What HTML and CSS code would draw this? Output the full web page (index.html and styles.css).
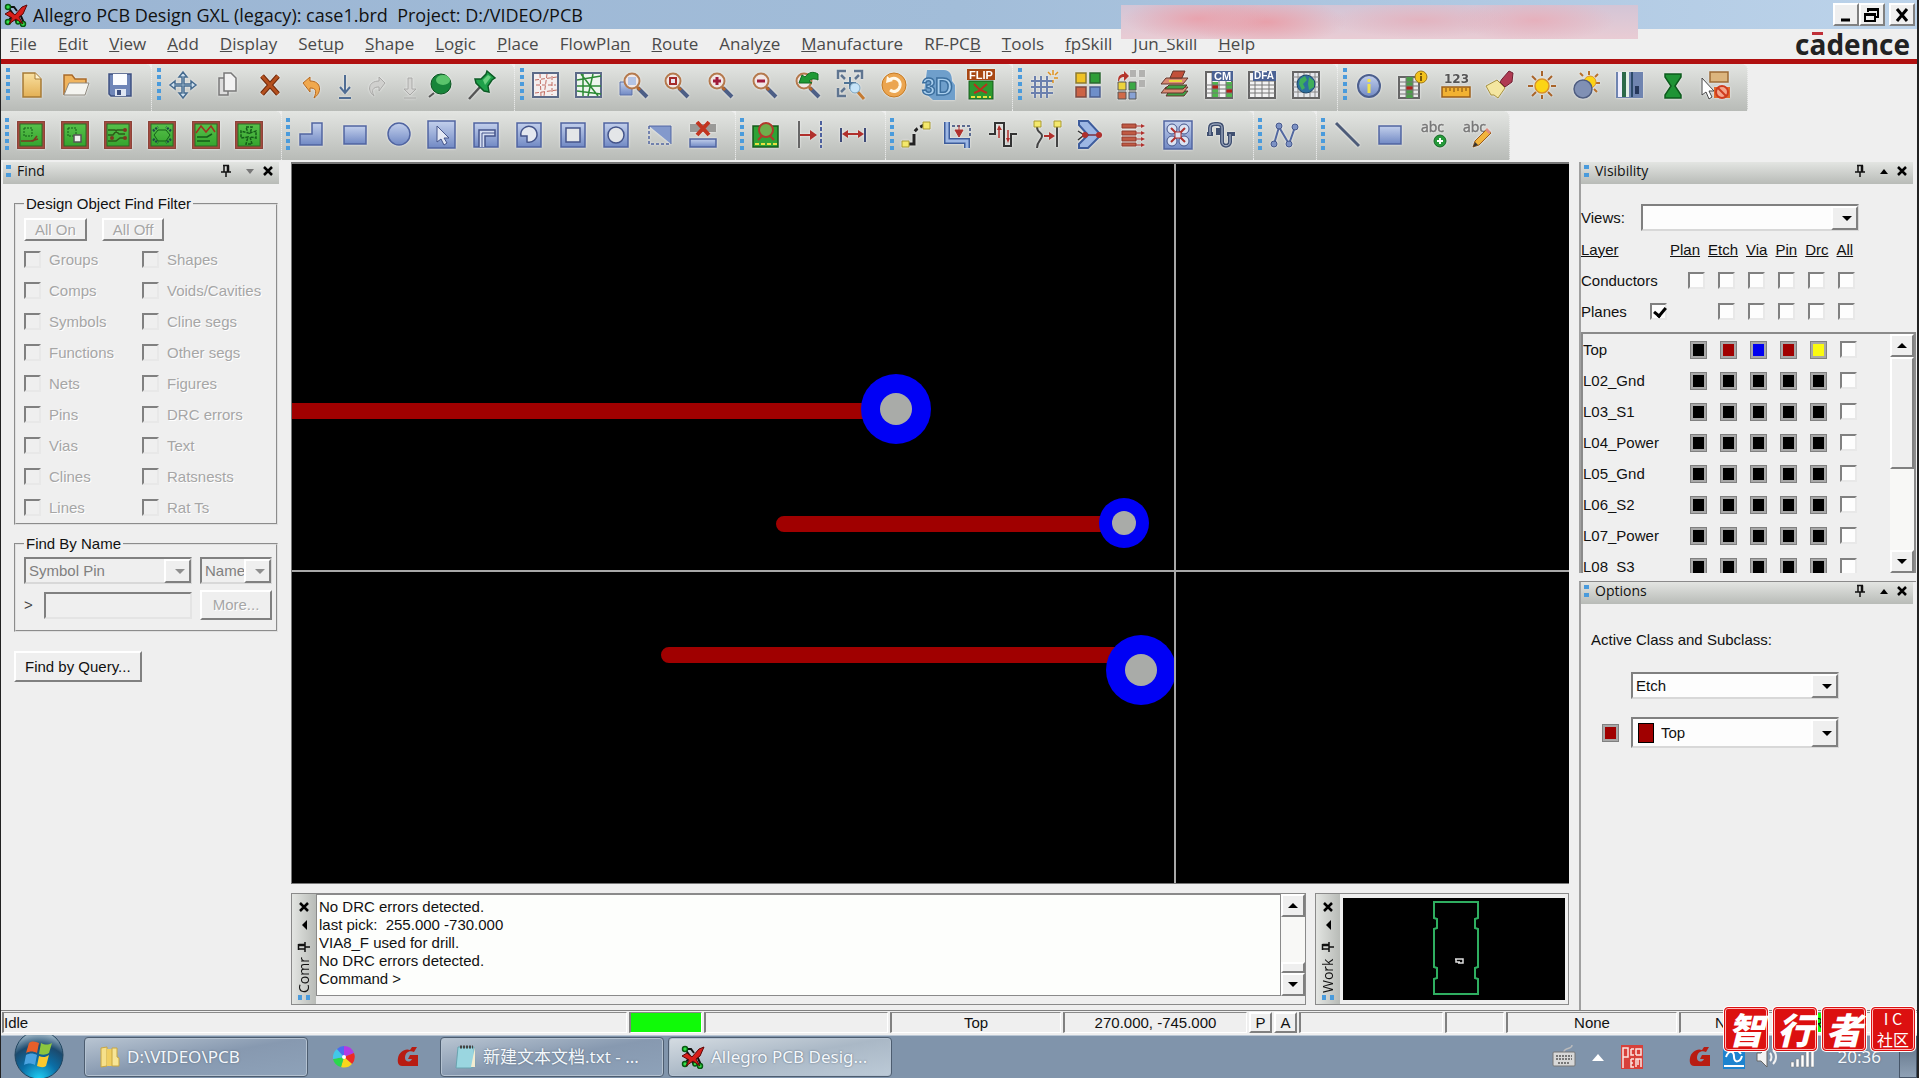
FILE: index.html
```
<!DOCTYPE html>
<html lang="en">
<head>
    <meta charset="utf-8">
    <meta name="viewport" content="width=device-width, initial-scale=1.0">
    <title>Allegro PCB Design GXL (legacy): case1.brd</title>
    <link rel="stylesheet" href="styles.css">
</head>
<body>
    <!-- Shared gradients and symbols -->
    <svg class="defs" width="0" height="0" aria-hidden="true">
        <defs>
            <linearGradient id="blue" x1="0" y1="0" x2="0" y2="1"><stop offset="0" stop-color="#c3d0ec"/><stop offset="1" stop-color="#7189c4"/></linearGradient>
            <linearGradient id="green" x1="0" y1="0" x2="0" y2="1"><stop offset="0" stop-color="#57c04a"/><stop offset="1" stop-color="#35a52e"/></linearGradient>
            <linearGradient id="sand" x1="0" y1="0" x2="0" y2="1"><stop offset="0" stop-color="#f9e0a0"/><stop offset="1" stop-color="#e3b055"/></linearGradient>
            <radialGradient id="orb" cx=".5" cy="1" r="1"><stop offset="0" stop-color="#1fd0f5"/><stop offset=".4" stop-color="#0b6ea6"/><stop offset=".7" stop-color="#1b4a6e"/><stop offset="1" stop-color="#b9ccd8"/></radialGradient>
        </defs>
        <symbol id="app" viewBox="0 0 24 24">
            <path d="M4 4l5 7-5 8M4 4h6l3 4M19 20h-6l-2-4M20 5l-4 6 4 9" fill="none" stroke="#111" stroke-width="2"/>
            <g fill="#35e04a" stroke="#075a12" stroke-width="1.5"><circle cx="4" cy="4" r="2.5"/><circle cx="4" cy="19" r="2.5"/><circle cx="19" cy="21" r="2.5"/><circle cx="14" cy="19" r="2"/></g>
            <path d="M1 11l5-3 5 4 7-8 5-2-4 9-4 3 4 7-7-5-7 5 3-6z" fill="#d81e1a" stroke="#5c0808"/>
        </symbol>
        <symbol id="pin" viewBox="0 0 12 14">
            <path d="M3 1.500h6M4 1.500v6M7.500 1.500v6M8.500 1.500v6M1 8h10M6 8v5" fill="none" stroke="#111" stroke-width="1.500"/>
        </symbol>
        <symbol id="cross" viewBox="0 0 12 12"><path d="M2 2l8 8M10 2l-8 8" stroke="#000" stroke-width="2.500"/></symbol>
        <symbol id="lens" viewBox="0 0 28 28">
            <path d="M17 17l9 9" stroke="#4d5f86" stroke-width="4"/><path d="M16 16l3 3" stroke="#b5662c" stroke-width="3"/>
            <circle cx="11" cy="10" r="7.500" fill="#f1e7e6" stroke="#b4794d" stroke-width="2"/>
        </symbol>
        <symbol id="board" viewBox="0 0 28 28"><rect x="0" y="0" width="28" height="28" rx="1" fill="#a14a3f" stroke="#7a3a33"/><rect x="3" y="3" width="22" height="22" fill="url(#green)" stroke="#2c6b26"/></symbol>
        <symbol id="gred" viewBox="0 0 24 24"><path d="M21 2l-3 5c-5-2-9 1-9 6 0 4 5 5 7 1h-4l2-4h8v11H6C3 21 1 18 2 13 3 7 9 3 14 5l2-3z" fill="#b81c12"/></symbol>
        <symbol id="plate" viewBox="0 0 28 28"><rect x="2" y="2" width="24" height="24" fill="url(#blue)" stroke="#4f63a0" stroke-width="1.500"/></symbol>
    </svg>

    <header class="titlebar">
        <svg class="app-icon"><use href="#app"/></svg>
        <h1>Allegro PCB Design GXL (legacy): case1.brd&nbsp; Project: D:/VIDEO/PCB</h1>
        <div class="window-buttons">
            <button aria-label="Minimize"><svg viewBox="0 0 20 18"><path d="M5 14h9" stroke="#000" stroke-width="3"/></svg></button>
            <button aria-label="Restore"><svg viewBox="0 0 20 18"><path d="M6 6V3h10v8h-3M6 4h10M3 8h10v7H3zM3 9h10" fill="none" stroke="#000" stroke-width="2"/></svg></button>
            <button class="close" aria-label="Close"><svg viewBox="0 0 20 18"><path d="M5 3l10 12M15 3L5 15" stroke="#000" stroke-width="3"/></svg></button>
        </div>
        <div class="smudge"></div>
    </header>

    <nav class="menubar">
        <a href="#"><u>F</u>ile</a>
        <a href="#"><u>E</u>dit</a>
        <a href="#"><u>V</u>iew</a>
        <a href="#"><u>A</u>dd</a>
        <a href="#"><u>D</u>isplay</a>
        <a href="#">Set<u>u</u>p</a>
        <a href="#"><u>S</u>hape</a>
        <a href="#"><u>L</u>ogic</a>
        <a href="#"><u>P</u>lace</a>
        <a href="#">FlowPla<u>n</u></a>
        <a href="#"><u>R</u>oute</a>
        <a href="#">Analy<u>z</u>e</a>
        <a href="#"><u>M</u>anufacture</a>
        <a href="#">RF-PC<u>B</u></a>
        <a href="#"><u>T</u>ools</a>
        <a href="#"><u>f</u>pSkill</a>
        <a href="#"><u>J</u>un_Skill</a>
        <a href="#"><u>H</u>elp</a>
        <span class="brand">c<span class="macron">a</span>dence</span>
    </nav>

    <div class="toolbars">
        <div class="toolbar">
            <div class="group g-file">
                <button aria-label="New"><svg viewBox="0 0 28 28"><path d="M5 2h12l6 6v18H5z" fill="url(#sand)" stroke="#a57a35" stroke-width="1.500"/><path d="M17 2v6h6" fill="#fff3cf" stroke="#a57a35"/></svg></button>
                <button aria-label="Open"><svg viewBox="0 0 28 28"><path d="M2 24V4h8l3 4h11v6" fill="#f0b45e" stroke="#a8692a" stroke-width="1.500"/><path d="M2 24L7 12h20l-4 12z" fill="#f4f4f0" stroke="#8f8a80"/></svg></button>
                <button aria-label="Save"><svg viewBox="0 0 28 28"><path d="M3 3h22v22H5l-2-2z" fill="#6f86b8" stroke="#3e5080" stroke-width="1.500"/><path d="M7 3h14v11H7z" fill="#fafcff"/><path d="M9 18h11v7H9z" fill="#dfe6f2"/><path d="M11 19h4v5h-4z" fill="#3e5080"/></svg></button>
            </div>
            <div class="group g-edit">
                <button aria-label="Move"><svg viewBox="0 0 28 28"><path d="M14 1l4 5h-3v7h7v-3l5 4-5 4v-3h-7v7h3l-4 5-4-5h3v-7H6v3l-5-4 5-4v3h7V6h-3z" fill="#cfe0ef" stroke="#466b8f" stroke-width="1.500"/></svg></button>
                <button aria-label="Copy"><svg viewBox="0 0 28 28"><path d="M5 7h9v17H5z" fill="#ddd" stroke="#777" stroke-width="1.500"/><path d="M10 2h7l5 5v13H10z" fill="#f2f2f2" stroke="#777" stroke-width="1.500"/></svg></button>
                <button aria-label="Delete"><svg viewBox="0 0 28 28"><path d="M4 5l16 18M20 5L4 23" stroke="#6f2a0b" stroke-width="5"/><path d="M4 5l16 18M20 5L4 23" stroke="#b4501e" stroke-width="3"/></svg></button>
                <button class="mid" aria-label="Undo"><svg viewBox="0 0 28 28"><path d="M4 12l7-6v4c12 0 12 12 4 17 3-7 2-10-4-10v4z" fill="#f0a84e" stroke="#b5671d"/></svg></button>
                <button class="narrow" aria-label="Undo list"><svg viewBox="0 0 28 28"><path d="M14 4v17M9 16l5 6 5-6M8 27h12" fill="none" stroke="#4f6d94" stroke-width="2"/></svg></button>
                <button class="mid" aria-label="Redo"><svg viewBox="0 0 28 28"><path d="M21 12l-6-6v4c-11 0-12 10-5 15-3-6-1-9 5-9v4z" fill="#d0d0ce" stroke="#a8a8a6"/></svg></button>
                <button class="narrow" aria-label="Redo list"><svg viewBox="0 0 28 28"><path d="M12 7h4v11h4l-6 6-6-6h4zM8 27h12" fill="#d4d4d2" stroke="#a8a8a6"/></svg></button>
                <button class="mid" aria-label="Fix"><svg viewBox="0 0 28 28"><path d="M6 22l-5 4" stroke="#555" stroke-width="2"/><circle cx="13" cy="13" r="10" fill="#17853a" stroke="#0c5220"/><ellipse cx="15" cy="9" rx="7" ry="5" fill="#5ac46c"/></svg></button>
                <button aria-label="Unfix"><svg viewBox="0 0 28 28"><path d="M0 28l11-12" stroke="#555" stroke-width="2.500"/><path d="M18 0l8 7-3 2-4 6 1 6-5-1L7 12l-1-4 6 0 5-5z" fill="#1fa04a" stroke="#0b5a24" stroke-width="1.500"/><path d="M14 9l5-5 3 2-6 8z" fill="#69d07f"/></svg></button>
            </div>
            <div class="group g-view">
                <button aria-label="Unrats all"><svg viewBox="0 0 28 28"><rect x="1" y="2" width="25" height="24" fill="#f5efef" stroke="#5c6a88" stroke-width="2"/><path d="M3 9l22-3M4 14h20M3 22l22-3M8 3l1 22M15 3l-3 22M20 5v19" fill="none" stroke="#c26a60" stroke-dasharray="4 2"/></svg></button>
                <button aria-label="Rats all"><svg viewBox="0 0 28 28"><rect x="1" y="2" width="25" height="24" fill="#eef5ee" stroke="#5c6a88" stroke-width="2"/><path d="M2 9l24-4M2 15h24M2 20l24 3M8 3v22M18 3l-5 22M6 3l17 22" fill="none" stroke="#2c8a35" stroke-width="1.500"/></svg></button>
                <button aria-label="Zoom points"><svg viewBox="0 0 28 28"><path d="M1 11h12v13H1z" fill="url(#blue)" stroke="#5c70a8"/><use href="#lens" x="2" width="28" height="28"/><path d="M9 6h8v8H9z" fill="#b4c4e6"/></svg></button>
                <button aria-label="Zoom fit"><svg viewBox="0 0 28 28"><use href="#lens"/><path d="M8 7h6v6H8z" fill="#e8e6f2" stroke="#a52a2a" stroke-width="2"/></svg></button>
                <button aria-label="Zoom in"><svg viewBox="0 0 28 28"><use href="#lens"/><path d="M11 6v8M7 10h8" stroke="#a01c3c" stroke-width="3"/></svg></button>
                <button aria-label="Zoom out"><svg viewBox="0 0 28 28"><use href="#lens"/><path d="M7 10h8" stroke="#a01c3c" stroke-width="3"/></svg></button>
                <button aria-label="Zoom previous"><svg viewBox="0 0 28 28"><use href="#lens"/><path d="M6 12l3-8 3 2c4-5 8-6 13-3v6c-4-2-7-1-9 1l3 2z" fill="#1f9a35" stroke="#0f6a1f"/></svg></button>
                <button aria-label="Zoom center"><svg viewBox="0 0 28 28"><path d="M1 8V0h8M17 0h8v8M1 17v8h8M4 4l4 4M22 4l-4 4M4 21l4-4" fill="none" stroke="#5f7590" stroke-width="2.500"/><path d="M13 6v12M7 12h12" stroke="#4d7396" stroke-width="2"/><path d="M20 20l7 8" stroke="#c47a31" stroke-width="3"/><circle cx="18" cy="17" r="5" fill="#c6e4f8" stroke="#7ba4c0"/></svg></button>
                <button aria-label="Redraw"><svg viewBox="0 0 28 28"><circle cx="14" cy="14" r="12" fill="#eba550" stroke="#c57a22"/><path d="M9 9c6-4 12 0 11 6-1 5-6 7-10 4" fill="none" stroke="#fff8e8" stroke-width="3"/><path d="M6 12l1-7 6 5z" fill="#fff8e8"/></svg></button>
                <button aria-label="3D view"><svg viewBox="0 0 28 28"><path d="M3-1h17c6 0 8 5 8 11l3 4v15H9l-9-8z" fill="#6f9fcb"/><text x="-2" y="24" font-family="Liberation Sans" font-weight="bold" font-size="24" fill="#a9cfee" stroke="#3c6f9e" stroke-width="1.500">3D</text></svg></button>
                <button aria-label="Flip board"><svg viewBox="0 0 28 28"><rect x="0" y="-2" width="28" height="11" fill="#a84713"/><text x="2" y="8" font-family="Liberation Sans" font-weight="bold" font-size="11" fill="#fff">FLIP</text><rect x="2" y="10" width="24" height="18" fill="#2c9a30" stroke="#14581a"/><path d="M7 13l6 6 7-6M7 22l7-3 6 3" fill="none" stroke="#b8301e" stroke-width="2"/><path d="M4 26h20" stroke="#e8e040" stroke-width="2" stroke-dasharray="4 2"/></svg></button>
            </div>
            <div class="group g-setup">
                <button aria-label="Grid toggle"><svg viewBox="0 0 28 28"><path d="M1 10h22M1 16h22M1 22h22M5 5v22M11 5v22M17 5v22" stroke="#6b80ae" stroke-width="2"/><path d="M23-1v5M18 1l3 3M28 1l-3 3M24 7h4M23 9v3" stroke="#e0921e" stroke-width="1.500"/></svg></button>
                <button aria-label="Color"><svg viewBox="0 0 28 28"><g stroke-width="1.500"><path d="M2 2h10v10H2z" fill="#f0c325" stroke="#8a7a30"/><path d="M16 2h10v10H16z" fill="#2f9e38" stroke="#2b6630"/><path d="M2 16h10v10H2z" fill="#cc6345" stroke="#7d4a40"/><path d="M16 16h10v10H16z" fill="#6f8fc9" stroke="#4c5f8d"/></g></svg></button>
                <button aria-label="Color priority"><svg viewBox="0 0 28 28"><path d="M13-1h6v7h-6zM22-1h6v7h-6zM22 9h6v7h-6z" fill="#b2b2b0"/><path d="M1 10c0-5 2-7 6-7V0l5 5-5 5V6c-3 0-4 1-5 4z" fill="#b5362c"/><path d="M1 11h8v8H1z" fill="#ecd33c" stroke="#555"/><path d="M12 11h7v8h-7z" fill="#3aa845" stroke="#555"/><path d="M1 21h8v7H1z" fill="#d06a48" stroke="#555"/><path d="M12 21h7v7h-7z" fill="#88a2d4" stroke="#555"/></svg></button>
                <button aria-label="Cross section"><svg viewBox="0 0 28 28"><g stroke="#60342a"><path d="M5 25l3-5h19l-4 5z" fill="#3fa045"/><path d="M0 22l5-6h22l-5 6z" fill="#d98a72"/><path d="M4 18l4-4h18l-4 4z" fill="#3fa045"/><path d="M0 13l5-6h22l-5 6z" fill="#d98a72"/><path d="M8 10h13" stroke="#e8d93a" stroke-width="2"/><path d="M9 7l3-7h12l-3 7z" fill="#c2503a"/></g></svg></button>
                <button aria-label="Constraint manager"><svg viewBox="0 0 28 28"><path d="M1 1h26v26H1z" fill="#f3f3f3" stroke="#666" stroke-width="2"/><path d="M7 11h6v15H7zM21 11h6v15h-6z" fill="#4fb64c"/><path d="M7 14h6v4H7zM21 18h6v4h-6z" fill="#b02018"/><path d="M1 14h26M1 18h26M1 22h26M7 2v24M14 10v16M21 10v16" stroke="#777"/><path d="M7 0h21v10H7z" fill="#4a6294"/><text x="9" y="9" font-family="Liberation Sans" font-size="11" font-weight="bold" fill="#fff">CM</text></svg></button>
                <button aria-label="DFA"><svg viewBox="0 0 28 28"><path d="M1 1h26v26H1z" fill="#f3f3f3" stroke="#666" stroke-width="2"/><path d="M1 10h26M1 14h26M1 18h26M1 22h26M7 2v24M14 10v16M21 10v16" stroke="#777"/><path d="M5 0h23v10H5z" fill="#4a6294"/><text x="6" y="8" font-family="Liberation Sans" font-size="10" font-weight="bold" fill="#fff">DFA</text></svg></button>
                <button aria-label="Global constraints"><svg viewBox="0 0 28 28"><path d="M1 1h26v26H1z" fill="#e6e8ec" stroke="#666" stroke-width="2"/><path d="M1 6h26M1 11h26M1 16h26M1 21h26M6 2v24M12 2v24M18 2v24M23 2v24" stroke="#888"/><circle cx="14" cy="13" r="9" fill="#2c6f9e" stroke="#1d4668"/><path d="M8 8l5-3 2 4-4 4 2 4-3 2-3-6zM17 6l5 4v6l-5 3-1-6z" fill="#3fae5a"/></svg></button>
            </div>
            <div class="group g-info">
                <button aria-label="Show element"><svg viewBox="0 0 28 28"><circle cx="14" cy="15" r="11" fill="url(#blue)" stroke="#4c5f8d" stroke-width="2"/><path d="M14 8v3M14 13v9" stroke="#f0e24c" stroke-width="3"/></svg></button>
                <button aria-label="Constraint info"><svg viewBox="0 0 28 28"><path d="M1 6h20v21H1z" fill="#e8e8e8" stroke="#666" stroke-width="2"/><path d="M8 6h7v21H8z" fill="#4a9c48"/><path d="M8 15h7v4H8z" fill="#b02018"/><path d="M2 11h19M2 15h19M2 19h19M2 23h19M8 6v20M15 6v20" stroke="#777"/><circle cx="23" cy="6" r="6" fill="#f3c21c" stroke="#9a7412"/><path d="M23 2v2M23 5v5" stroke="#7d5a05" stroke-width="2"/></svg></button>
                <button aria-label="Measure"><svg viewBox="0 0 28 28"><text x="2" y="12" font-family="DejaVu Sans" font-size="12" font-weight="bold" fill="#555">123</text><path d="M0 16h28v10H0z" fill="#f2b232" stroke="#9a5f1a" stroke-width="1.500"/><path d="M4 17v4M8 17v3M12 17v4M16 17v3M20 17v4M24 17v3" stroke="#7d4b10"/></svg></button>
                <button aria-label="Assign color"><svg viewBox="0 0 28 28"><path d="M17 8l7-8 4 2-1 9-7 5-5-5z" fill="#b03a52" stroke="#6e1f30"/><path d="M12 9l8 8-7 10-4-3-3 0-5-9z" fill="#f4e6a0" stroke="#a5903f"/></svg></button>
                <button aria-label="Highlight"><svg viewBox="0 0 28 28"><path d="M14 0v5M14 24v4M0 15h5M23 15h5M4 5l4 4M24 5l-4 4M4 25l4-4M24 25l-4-4" stroke="#a8642a" stroke-width="2"/><circle cx="14" cy="15" r="7" fill="#fcd414" stroke="#d8912a" stroke-width="1.500"/></svg></button>
                <button aria-label="Dehighlight"><svg viewBox="0 0 28 28"><path d="M17 0v4M26 3l-3 3M28 12h-4M25 21l-3-3M8 2l3 3" stroke="#b8702a" stroke-width="2"/><circle cx="18" cy="11" r="6" fill="#fcd414" stroke="#d8912a"/><circle cx="11" cy="18" r="9" fill="#8090b4" stroke="#4f5d80" stroke-width="1.500"/></svg></button>
                <button aria-label="Shadow mode"><svg viewBox="0 0 28 28"><path d="M1 1h27v26H1z" fill="#6f84b0"/><path d="M3 1h4v25H3z" fill="#eef"/><path d="M7 1h4v25H7z" fill="#2c6a4a"/><path d="M11 1h3v25h-3z" fill="#e4f0e8"/><path d="M17 1v25" stroke="#2c4a6a" stroke-width="2"/><path d="M20 15h4v8h-4z" fill="#26385c"/></svg></button>
                <button aria-label="Delay"><svg viewBox="0 0 28 28"><path d="M6 3h16v3l-6 9 6 9v3H6v-3l6-9-6-9z" fill="#1f9436" stroke="#0d5a1d" stroke-width="1.500"/></svg></button>
                <button aria-label="Waive DRC"><svg viewBox="0 0 28 28"><path d="M8 1h18v10H8z" fill="#dcb57e" stroke="#9c6a35" stroke-width="1.500"/><path d="M12 16h16v11H12z" fill="#e06a2c"/><circle cx="20" cy="21" r="6" fill="#f3a58c" stroke="#cf3a1e" stroke-width="2"/><path d="M16 17l8 8" stroke="#cf3a1e" stroke-width="2"/><path d="M0 7v17l4-3 3 7 3-2-3-6h5z" fill="#fff" stroke="#444"/></svg></button>
            </div>
        </div>
        <div class="toolbar lower">
            <div class="group g-modes">
                <button aria-label="Placement edit"><svg viewBox="0 0 28 28"><use href="#board"/><path d="M7 7h8v8H7z" fill="none" stroke="#145c18" stroke-dasharray="2 1"/><path d="M4 20h12l4-5M14 20l7-2" fill="none" stroke="#7a3a20" stroke-width="1.500"/></svg></button>
                <button aria-label="General edit"><svg viewBox="0 0 28 28"><use href="#board"/><path d="M7 7h8v8H7z" fill="none" stroke="#145c18" stroke-dasharray="2 1"/><path d="M13 14h7v7h-7z" fill="#eee" stroke="#555" stroke-width="1.500"/></svg></button>
                <button aria-label="Etch edit"><svg viewBox="0 0 28 28"><use href="#board"/><path d="M4 9h7l4 4h6M4 14h5l4-5h7M4 20h8l4-3h5" fill="none" stroke="#2c5c18" stroke-width="1.500"/><g fill="#7a3a20"><circle cx="21" cy="9" r="2"/><circle cx="21" cy="17" r="2"/><circle cx="8" cy="17" r="2"/></g></svg></button>
                <button aria-label="Signal integrity"><svg viewBox="0 0 28 28"><use href="#board"/><path d="M10 9h8l4 5-4 6h-8l-4-6z" fill="none" stroke="#145c18"/><path d="M5 10l5-4M23 10l-5-4M5 18l5 4M23 18l-5 4" stroke="#1c4a44" stroke-width="2.500" stroke-dasharray="2 1"/></svg></button>
                <button aria-label="Power analysis"><svg viewBox="0 0 28 28"><use href="#board"/><path d="M4 12l5-7 5 6 5-6 4 6" fill="none" stroke="#a03020" stroke-width="1.500"/><path d="M5 16h10l5-3M5 20h13" stroke="#145c18" stroke-width="1.500" fill="none"/></svg></button>
                <button aria-label="Flow planning"><svg viewBox="0 0 28 28"><use href="#board"/><path d="M11 6h6l-2 6 6-2v7l-6-1 2 7h-6l2-7-7 1v-7l7 2z" fill="none" stroke="#145c18" stroke-width="1.500" stroke-dasharray="3 1"/></svg></button>
            </div>
            <div class="group g-shape">
                <button aria-label="Add polygon"><svg viewBox="0 0 28 28"><path d="M14 2h10v22H2V13h12z" fill="url(#blue)" stroke="#5064a0" stroke-width="1.500"/></svg></button>
                <button aria-label="Add rectangle"><svg viewBox="0 0 28 28"><path d="M3 5h22v18H3z" fill="url(#blue)" stroke="#5064a0" stroke-width="1.500"/></svg></button>
                <button aria-label="Add circle"><svg viewBox="0 0 28 28"><circle cx="14" cy="13" r="11" fill="url(#blue)" stroke="#5064a0" stroke-width="1.500"/></svg></button>
                <button aria-label="Select shape"><svg viewBox="0 0 28 28"><rect x="0" y="0" width="27" height="27" fill="url(#blue)" stroke="#5064a0" stroke-width="1.500"/><path d="M9 5v16l4-3 3 6 3-2-3-5h5z" fill="#e4e8f4" stroke="#44548a"/></svg></button>
                <button aria-label="Void polygon"><svg viewBox="0 0 28 28"><use href="#plate"/><path d="M7 26V9h16v6H13v11" fill="#d5def2" stroke="#44548a" stroke-width="1.500"/><path d="M10 26V12h13" fill="none" stroke="#44548a"/></svg></button>
                <button aria-label="Void arc"><svg viewBox="0 0 28 28"><use href="#plate"/><path d="M9 7a8 8 0 1 1 3 14v-6H6a8 8 0 0 1 3-8z" fill="#e4e8f0" stroke="#44548a" stroke-width="1.500"/></svg></button>
                <button aria-label="Void rectangle"><svg viewBox="0 0 28 28"><use href="#plate"/><path d="M7 7h14v14H7z" fill="#e4e6e8" stroke="#44548a" stroke-width="1.500"/></svg></button>
                <button aria-label="Void circle"><svg viewBox="0 0 28 28"><use href="#plate"/><circle cx="14" cy="14" r="8" fill="#e4e6e8" stroke="#44548a" stroke-width="1.500"/></svg></button>
                <button aria-label="Void element"><svg viewBox="0 0 28 28"><path d="M3 5h22v18z" fill="#8399cc"/><path d="M3 5v18h22" fill="none" stroke="#5064a0" stroke-width="1.500" stroke-dasharray="3 2"/><path d="M3 5h22v18" fill="none" stroke="#5064a0"/></svg></button>
                <button aria-label="Delete islands"><svg viewBox="0 0 28 28"><path d="M1 3h26v8H1z" fill="#9a9a98"/><path d="M8 1l12 13M20 1L8 14" stroke="#c23520" stroke-width="4"/><path d="M1 18h26v8H1z" fill="url(#blue)" stroke="#5064a0" stroke-width="1.500"/></svg></button>
            </div>
            <div class="group g-dim">
                <button aria-label="Dimension environment"><svg viewBox="0 0 28 28"><rect x="1" y="5" width="25" height="21" fill="#2fa335" stroke="#14581a" stroke-width="1.500"/><path d="M3 23h22" stroke="#e8e040" stroke-width="2" stroke-dasharray="4 2"/><circle cx="14" cy="9" r="7" fill="#6fae4c" stroke="#b23a2c" stroke-width="2"/><path d="M10 15l-4 4M18 15l4 4" stroke="#b23a2c" stroke-width="2"/></svg></button>
                <button aria-label="Spacing"><svg viewBox="0 0 28 28"><path d="M3 0v27" stroke="#666" stroke-width="2"/><path d="M25 0v27" stroke="#4c5f9d" stroke-width="2" stroke-dasharray="4 2"/><path d="M4 14h12" stroke="#b0302c" stroke-width="2"/><path d="M14 9l7 5-7 5z" fill="#b0302c"/></svg></button>
                <button aria-label="Distance"><svg viewBox="0 0 28 28"><path d="M2 7v14M26 7v14" stroke="#3e4a78" stroke-width="2"/><path d="M6 13h16" stroke="#b0302c" stroke-width="2"/><path d="M3 13l6-4v8zM25 13l-6-4v8z" fill="#b0302c"/></svg></button>
            </div>
            <div class="group g-route">
                <button aria-label="Add connect"><svg viewBox="0 0 28 28"><path d="M4 23h8V11l3-3 7-4" fill="none" stroke="#222" stroke-width="3" stroke-dasharray="18 3 4 3"/><path d="M0 20h7v6H0zM21 1h7v7h-7z" fill="#f4e86c" stroke="#a89a30"/></svg></button>
                <button aria-label="Slide"><svg viewBox="0 0 28 28"><path d="M2 1v19h20v7" fill="none" stroke="#3d5c9c" stroke-width="6"/><path d="M2 1v19h20v7" fill="none" stroke="#9db7e4" stroke-width="3"/><path d="M7 5h18v12" fill="none" stroke="#5a6a90" stroke-width="2" stroke-dasharray="3 2"/><path d="M10 9h8l-4 7zM14 4v6" fill="#b0302c" stroke="#b0302c"/></svg></button>
                <button aria-label="Delay tune"><svg viewBox="0 0 28 28"><path d="M0 13h6V2h9v23h7V13h6" fill="none" stroke="#333" stroke-width="2"/><path d="M10 17V6M19 9v9" stroke="#b0302c" stroke-width="1.500"/><path d="M8 9l2-5 3 5zM17 17h4l-2 5z" fill="#b0302c"/></svg></button>
                <button aria-label="Custom smooth"><svg viewBox="0 0 28 28"><path d="M4 6c0 6 5 5 5 9s-5 5-5 12M24 6v20" fill="none" stroke="#444" stroke-width="2"/><path d="M1 0h7v6H1zM21 0h7v6h-7z" fill="#f4e86c" stroke="#a89a30"/><path d="M11 15h6" stroke="#b0302c" stroke-width="2"/><path d="M16 11l6 4-6 4z" fill="#b0302c"/></svg></button>
                <button aria-label="Vertex"><svg viewBox="0 0 28 28"><path d="M3 0h9l13 14-13 13H3v-4l9-9-9-10z" fill="#9db7e4" stroke="#3d5c9c" stroke-width="2"/><path d="M2 10l6 4-6 5" fill="none" stroke="#333" stroke-width="1.500"/><path d="M9 14h12" stroke="#7d3040" stroke-width="1.500"/><circle cx="9" cy="14" r="3" fill="#b0302c"/><circle cx="23" cy="14" r="3" fill="#b0302c"/></svg></button>
                <button aria-label="Spread lines"><svg viewBox="0 0 28 28"><g fill="#c05a44" stroke="#8f3a2c"><path d="M2 3h14v4H2zM2 10h14v4H2zM2 16h14v4H2zM2 22h14v3H2z"/></g><path d="M16 5h7M16 12h7M16 18h7M16 24h7" stroke="#b0302c"/><path d="M21 3l4 2-4 2zM21 10l4 2-4 2zM21 16l4 2-4 2zM21 22l4 2-4 2z" fill="#b0302c"/></svg></button>
                <button aria-label="Gloss"><svg viewBox="0 0 28 28"><rect x="0" y="0" width="28" height="28" fill="url(#blue)" stroke="#5064a0" stroke-width="1.500"/><g fill="#dbe3f3" stroke="#44548a"><circle cx="8" cy="8" r="5"/><circle cx="20" cy="8" r="5"/><circle cx="8" cy="20" r="5"/><circle cx="20" cy="20" r="5"/></g><path d="M7 7l14 14M21 7L7 21" stroke="#b0302c" stroke-width="2"/><path d="M11 11h6v6h-6z" fill="#dbe3f3" stroke="#b0302c"/></svg></button>
                <button aria-label="Phase tune"><svg viewBox="0 0 28 28"><path d="M3 14V7c0-3 2-4 5-4h3c3 0 4 2 4 4v14c0 5 8 5 8 0v-8M11 14V7M0 13h6M20 13h8" fill="none" stroke="#3f4f70" stroke-width="4"/><path d="M3 14V7c0-3 2-4 5-4h3c3 0 4 2 4 4v14c0 5 8 5 8 0v-8" fill="none" stroke="#b9c4d8"/></svg></button>
            </div>
            <div class="group g-net">
                <button aria-label="Net schedule"><svg viewBox="0 0 28 28"><path d="M4 23L9 6l10 17 6-17" fill="none" stroke="#5268a0" stroke-width="2"/><g fill="#7d92c4" stroke="#46588c"><circle cx="4" cy="23" r="3"/><circle cx="9" cy="5" r="3"/><circle cx="19" cy="23" r="3"/><circle cx="25" cy="6" r="3"/></g></svg></button>
            </div>
            <div class="group g-text">
                <button aria-label="Add line"><svg viewBox="0 0 28 28"><path d="M3 2l23 23" stroke="#4d5b78" stroke-width="3"/></svg></button>
                <button aria-label="Add frame"><svg viewBox="0 0 28 28"><path d="M3 5h22v18H3z" fill="url(#blue)" stroke="#5064a0" stroke-width="1.500"/></svg></button>
                <button aria-label="Add text"><svg viewBox="0 0 28 28"><text x="1" y="11" font-family="Open Sans" font-size="14" fill="#777" stroke="#777" stroke-width=".5">abc</text><circle cx="20" cy="20" r="6" fill="#25993a" stroke="#136422"/><path d="M20 17v6M17 20h6" stroke="#fff" stroke-width="2"/></svg></button>
                <button aria-label="Edit text"><svg viewBox="0 0 28 28"><text x="0" y="11" font-family="Open Sans" font-size="14" fill="#777" stroke="#777" stroke-width=".5">abc</text><path d="M10 26l2-6L24 8l4 4-12 12z" fill="#f2b43c" stroke="#9a5a1a"/><path d="M10 26l2-5 3 3z" fill="#333"/><path d="M22 9l4 4 2-2-4-4z" fill="#e08a7a"/></svg></button>
            </div>
        </div>
    </div>

    <main class="workspace">
        <aside class="find-panel">
            <div class="panel-title"><i class="grip"></i><h2>Find</h2><button aria-label="Pin"><svg class="pin"><use href="#pin"/></svg></button><button aria-label="Menu"><i class="tri down faint"></i></button><button aria-label="Close"><svg class="x"><use href="#cross"/></svg></button></div>
            <div class="find-body">
                <fieldset class="filter">
                    <legend>Design Object Find Filter</legend>
                    <div class="all-buttons"><button class="btn" disabled>All On</button><button class="btn" disabled>All Off</button></div>
                    <div class="filters">
                        <label><input type="checkbox" disabled>Groups</label><label><input type="checkbox" disabled>Shapes</label>
                        <label><input type="checkbox" disabled>Comps</label><label><input type="checkbox" disabled>Voids/Cavities</label>
                        <label><input type="checkbox" disabled>Symbols</label><label><input type="checkbox" disabled>Cline segs</label>
                        <label><input type="checkbox" disabled>Functions</label><label><input type="checkbox" disabled>Other segs</label>
                        <label><input type="checkbox" disabled>Nets</label><label><input type="checkbox" disabled>Figures</label>
                        <label><input type="checkbox" disabled>Pins</label><label><input type="checkbox" disabled>DRC errors</label>
                        <label><input type="checkbox" disabled>Vias</label><label><input type="checkbox" disabled>Text</label>
                        <label><input type="checkbox" disabled>Clines</label><label><input type="checkbox" disabled>Ratsnests</label>
                        <label><input type="checkbox" disabled>Lines</label><label><input type="checkbox" disabled>Rat Ts</label>
                    </div>
                </fieldset>
                <fieldset class="by-name">
                    <legend>Find By Name</legend>
                    <span class="combo off"><select aria-label="Object type" disabled><option>Symbol Pin</option></select></span>
                    <span class="combo off"><select aria-label="Match by" disabled><option>Name</option></select></span>
                    <label class="prompt">&gt;<input type="text" disabled></label>
                    <button class="btn" disabled>More...</button>
                </fieldset>
                <button class="btn query">Find by Query...</button>
            </div>
        </aside>

        <section class="center">
            <div class="design">
                <svg width="100%" height="100%">
                    <g stroke="#a00000" stroke-width="16" stroke-linecap="round">
                        <path d="M-10 247H604M492 360H832M377 491H849"/>
                    </g>
                    <g fill="#0000f5"><circle cx="604" cy="245" r="35"/><circle cx="832" cy="359" r="25"/><circle cx="849" cy="506" r="35"/></g>
                    <g fill="#a9aba8"><circle cx="604" cy="245" r="16"/><circle cx="832" cy="359" r="12"/><circle cx="849" cy="506" r="16"/></g>
                    <path d="M883 0V2000M0 407H3000" stroke="#a8a8a8" stroke-width="2"/>
                </svg>
            </div>
            <div class="docks">
                <section class="dock command">
                    <div class="dock-title"><button aria-label="Close"><svg class="x"><use href="#cross"/></svg></button><i class="tri left"></i><svg class="pin side-pin"><use href="#pin"/></svg><h2>Comr</h2><i class="grip"></i></div>
                    <pre class="log">No DRC errors detected.
last pick:  255.000 -730.000
VIA8_F used for drill.
No DRC errors detected.
Command &gt;</pre>
                    <div class="scrollbar low"><button aria-label="Scroll up"><i class="tri up"></i></button><span class="track"><i class="thumb"></i></span><button aria-label="Scroll down"><i class="tri down"></i></button></div>
                </section>
                <section class="dock world">
                    <div class="dock-title"><button aria-label="Close"><svg class="x"><use href="#cross"/></svg></button><i class="tri left"></i><svg class="pin side-pin"><use href="#pin"/></svg><h2>Work</h2><i class="grip"></i></div>
                    <div class="world-view">
                        <svg viewBox="0 0 222 102">
                            <path d="M91 4h44v16l-3 1v9l3 1v38l-3 1v10l3 1v15H91V81l3-1V70l-3-1V31l3-1v-9l-3-1z" fill="none" stroke="#2fae60" stroke-width="2"/>
                            <path d="M112 61h8v4h-5M113 61v3h4" fill="none" stroke="#ddd" stroke-width="1.500"/>
                        </svg>
                    </div>
                </section>
            </div>
        </section>

        <aside class="side">
            <section class="visibility">
                <div class="panel-title"><i class="grip"></i><h2>Visibility</h2><button aria-label="Pin"><svg class="pin"><use href="#pin"/></svg></button><button aria-label="Collapse"><i class="tri up"></i></button><button aria-label="Close"><svg class="x"><use href="#cross"/></svg></button></div>
                <div class="views"><label for="views">Views:</label><span class="combo"><select id="views"><option></option></select></span></div>
                <table class="layers">
                    <thead>
                        <tr class="head"><th>Layer</th><th>Plan</th><th>Etch</th><th>Via</th><th>Pin</th><th>Drc</th><th>All</th></tr>
                    </thead>
                    <tbody>
                        <tr><th>Conductors</th><td><input type="checkbox" aria-label="Conductors plan"></td><td><input type="checkbox" aria-label="Conductors etch"></td><td><input type="checkbox" aria-label="Conductors via"></td><td><input type="checkbox" aria-label="Conductors pin"></td><td><input type="checkbox" aria-label="Conductors drc"></td><td><input type="checkbox" aria-label="Conductors all"></td></tr>
                        <tr><th><label class="planes">Planes<input type="checkbox" checked></label></th><td></td><td><input type="checkbox" aria-label="Planes etch"></td><td><input type="checkbox" aria-label="Planes via"></td><td><input type="checkbox" aria-label="Planes pin"></td><td><input type="checkbox" aria-label="Planes drc"></td><td><input type="checkbox" aria-label="Planes all"></td></tr>
                    </tbody>
                </table>
                <div class="layer-list">
                    <table class="layers">
                        <tbody>
                            <tr><th>Top</th><td><i class="swatch"></i></td><td><i class="swatch red"></i></td><td><i class="swatch blue"></i></td><td><i class="swatch red"></i></td><td><i class="swatch yellow"></i></td><td><input type="checkbox" aria-label="Top all"></td></tr>
                            <tr><th>L02_Gnd</th><td><i class="swatch"></i></td><td><i class="swatch"></i></td><td><i class="swatch"></i></td><td><i class="swatch"></i></td><td><i class="swatch"></i></td><td><input type="checkbox" aria-label="L02_Gnd all"></td></tr>
                            <tr><th>L03_S1</th><td><i class="swatch"></i></td><td><i class="swatch"></i></td><td><i class="swatch"></i></td><td><i class="swatch"></i></td><td><i class="swatch"></i></td><td><input type="checkbox" aria-label="L03_S1 all"></td></tr>
                            <tr><th>L04_Power</th><td><i class="swatch"></i></td><td><i class="swatch"></i></td><td><i class="swatch"></i></td><td><i class="swatch"></i></td><td><i class="swatch"></i></td><td><input type="checkbox" aria-label="L04_Power all"></td></tr>
                            <tr><th>L05_Gnd</th><td><i class="swatch"></i></td><td><i class="swatch"></i></td><td><i class="swatch"></i></td><td><i class="swatch"></i></td><td><i class="swatch"></i></td><td><input type="checkbox" aria-label="L05_Gnd all"></td></tr>
                            <tr><th>L06_S2</th><td><i class="swatch"></i></td><td><i class="swatch"></i></td><td><i class="swatch"></i></td><td><i class="swatch"></i></td><td><i class="swatch"></i></td><td><input type="checkbox" aria-label="L06_S2 all"></td></tr>
                            <tr><th>L07_Power</th><td><i class="swatch"></i></td><td><i class="swatch"></i></td><td><i class="swatch"></i></td><td><i class="swatch"></i></td><td><i class="swatch"></i></td><td><input type="checkbox" aria-label="L07_Power all"></td></tr>
                            <tr><th>L08_S3</th><td><i class="swatch"></i></td><td><i class="swatch"></i></td><td><i class="swatch"></i></td><td><i class="swatch"></i></td><td><i class="swatch"></i></td><td><input type="checkbox" aria-label="L08_S3 all"></td></tr>
                        </tbody>
                    </table>
                    <div class="scrollbar"><button aria-label="Scroll up"><i class="tri up"></i></button><span class="track"><i class="thumb"></i></span><button aria-label="Scroll down"><i class="tri down"></i></button></div>
                </div>
            </section>
            <section class="options">
                <div class="panel-title"><i class="grip"></i><h2>Options</h2><button aria-label="Pin"><svg class="pin"><use href="#pin"/></svg></button><button aria-label="Collapse"><i class="tri up"></i></button><button aria-label="Close"><svg class="x"><use href="#cross"/></svg></button></div>
                <div class="options-body">
                    <p>Active Class and Subclass:</p>
                    <span></span><span class="combo"><select aria-label="Active class"><option>Etch</option></select></span>
                    <i class="swatch red"></i><span class="combo subclass"><select aria-label="Active subclass"><option>Top</option></select><i class="chip"></i></span>
                </div>
            </section>
        </aside>
    </main>

    <footer class="statusbar">
        <span class="cell idle">Idle</span>
        <span class="cell ready"></span>
        <span class="cell w-l"></span>
        <span class="cell w-m">Top</span>
        <span class="cell w-l">270.000, -745.000</span>
        <button>P</button>
        <button>A</button>
        <span class="cell w-s"></span>
        <span class="cell w-xs"></span>
        <span class="cell w-m">None</span>
        <span class="cell last"><span>N</span><b>R</b></span>
    </footer>

    <nav class="taskbar">
        <button class="start" aria-label="Start"><svg viewBox="0 0 50 44">
            <circle cx="25" cy="20" r="24" fill="url(#orb)" stroke="#20455f"/>
            <path d="M15 8c4-3 7-1 10 0l-2 10c-4-2-7-2-11 0z" fill="#e85f2a"/><path d="M27 8c4 2 7 2 11 0l-3 10c-3 2-6 2-10 1z" fill="#8cc63e"/>
            <path d="M12 20c4-2 7-2 11 0l-2 10c-4-2-7-2-11 0z" fill="#4aa3e0"/><path d="M25 21c4 2 7 1 10-1l-3 11c-3 2-6 1-9 0z" fill="#fbc92f"/>
        </svg></button>
        <button class="task"><svg viewBox="0 0 24 24"><path d="M4 3l6-1v19l-6 1z" fill="#f6e08a" stroke="#c8a640"/><path d="M10 4h6v17h-6z" fill="#f0cf62"/><path d="M15 3h5v9l2 1v8h-7z" fill="#f7e596" stroke="#c8a640"/></svg>D:\VIDEO\PCB</button>
        <button class="quick" aria-label="Player"><svg viewBox="0 0 24 24"><path d="M12 12L12 1a11 11 0 0 1 10 7z" fill="#b13ae6"/><path d="M12 12l10-4a11 11 0 0 1-2 11z" fill="#ee2a24"/><path d="M12 12l8 7a11 11 0 0 1-11 3z" fill="#f8d61c"/><path d="M12 12L9 22a11 11 0 0 1-8-8z" fill="#2ad84c"/><path d="M12 12L1 14A11 11 0 0 1 5 4z" fill="#42c8e8"/><path d="M12 12L5 4a11 11 0 0 1 7-3z" fill="#4a6df0"/><circle cx="12" cy="12" r="2" fill="#fff"/></svg></button>
        <button class="quick" aria-label="Recorder"><svg><use href="#gred"/></svg></button>
        <button class="task"><svg viewBox="0 0 24 24"><path d="M5 2h16l1 19-4 2H3z" fill="#9ad6e0" stroke="#6aa4b0"/><path d="M18 22l4-20v20z" fill="#f3ecd0"/><path d="M7 2h13" stroke="#444" stroke-width="3" stroke-dasharray="2 1"/></svg>新建文本文档.txt - ...</button>
        <button class="task active"><svg><use href="#app"/></svg>Allegro PCB Desig...</button>
        <div class="tray">
            <svg viewBox="0 0 24 24"><path d="M12 7c0-5 8-2 8-7" fill="none" stroke="#bbb" stroke-width="1.500"/><rect x="1" y="7" width="22" height="14" rx="1" fill="#d8d8d8" stroke="#777"/><path d="M4 11h16M4 14h16M6 18h12" stroke="#777" stroke-width="2" stroke-dasharray="2 1"/></svg>
            <svg viewBox="0 0 24 24"><path d="M6 16l6-7 6 7z" fill="#fff"/></svg>
            <svg viewBox="0 0 24 24"><path d="M1 0h22v24H1z" fill="#d8403a"/><path d="M3 23V3h5v9H3M11 4h3M11 4v6h3M16 10V4h5v6h-5M11 14h3M11 14v8h3M11 18h2M16 22v-8h5v8M18 14v6" fill="none" stroke="#fbe3e0" stroke-width="1.500"/></svg>
            <svg class="spaced"><use href="#gred"/></svg>
            <svg viewBox="0 0 24 24"><path d="M1 0h22v24H1z" fill="#1c83cf"/><path d="M4 12c3-8 8-6 8 0s6 6 8-1M6 5c6-3 10 0 13 4" fill="none" stroke="#fff" stroke-width="2"/><path d="M2 21h20" stroke="#fff" stroke-width="2"/></svg>
            <svg viewBox="0 0 24 24"><path d="M1 8h4l6-6v20l-6-6H1z" fill="#f2f2f2" stroke="#666"/><path d="M14 8c2 2 2 6 0 8M17 5c4 4 4 10 0 14" fill="none" stroke="#f2f2f2" stroke-width="2"/></svg>
            <svg viewBox="0 0 24 24"><path d="M1 17h3v5H1zM6 14h3v8H6zM11 10h3v12h-3zM16 6h3v16h-3zM21 2h3v20h-3z" fill="#fff" stroke="#777" stroke-width=".5"/></svg>
            <time>20:36</time>
            <button class="show-desktop" aria-label="Show desktop"></button>
        </div>
    </nav>

    <div class="stamps">
        <span>智</span><span>行</span><span>者</span><span class="small">I C<br>社区</span>
    </div>
</body>
</html>
```
FILE: styles.css
```
:root {
    --face: #efefef;
    --line: #8a8a8a;
    --shade: #808080;
    --muted: #a6a6a6;
    --ui: "Open Sans", "Noto Sans", sans-serif;
    --bar: linear-gradient(#e3e5e2, #b8bbb7);
}

* {
    box-sizing: border-box;
}

body {
    display: flex;
    flex-direction: column;
    position: relative;
    height: 100vh;
    margin: 0;
    overflow: hidden;
    background: var(--face);
    border-left: 1px solid #222;
    border-right: 2px solid #222;
    color: #111;
    font: 15px/18px "Liberation Sans", sans-serif;
}

h1, h2, p, pre {
    margin: 0;
    font-weight: 400;
}

button, input, select {
    font: inherit;
    color: inherit;
}

button {
    display: flex;
    align-items: center;
    justify-content: center;
    padding: 0;
    border: 0;
    background: none;
    white-space: nowrap;
}

svg {
    flex: none;
}

.defs {
    position: absolute;
}

/* Title and menu */
.titlebar {
    display: flex;
    align-items: center;
    position: relative;
    height: 29px;
    padding: 0 2px 0 3px;
    background: linear-gradient(90deg, #9bb5d3, #a2bdd9 50%, #bcd3ea);
}

.app-icon {
    width: 24px;
    height: 24px;
}

.titlebar h1 {
    flex: 1;
    margin-left: 5px;
    font: 18px/24px var(--ui);
    white-space: pre;
}

.window-buttons {
    display: flex;
}

.window-buttons button {
    width: 26px;
    height: 23px;
}

.window-buttons svg {
    width: 20px;
    height: 18px;
}

.window-buttons .close {
    margin-left: 4px;
}

.window-buttons button, .btn, .scrollbar button, .thumb, .statusbar button {
    background: var(--face);
    border: 2px solid;
    border-color: #fff var(--shade) var(--shade) #fff;
}

.smudge {
    position: absolute;
    top: 5px;
    right: 279px;
    width: 517px;
    height: 34px;
    background:
        radial-gradient(ellipse 75px 22px at 15% 40%, #e8a3ae, transparent),
        radial-gradient(ellipse 80px 24px at 28% 50%, #e8a0aa, transparent),
        radial-gradient(ellipse 90px 18px at 58% 45%, #e3b3bf, transparent),
        radial-gradient(ellipse 80px 22px at 80% 45%, #e6b0bc, transparent),
        linear-gradient(#d3c5d6, #e9ccd4);
}

.menubar {
    display: flex;
    align-items: center;
    gap: 21px;
    height: 35px;
    padding: 0 7px 0 9px;
    border-bottom: 5px solid #b01010;
}

.menubar a {
    color: #4a4a4a;
    font: 17px/24px var(--ui);
    text-decoration: none;
}

.brand {
    margin-left: auto;
    color: #222;
    font: bold 28px/28px var(--ui);
}

.macron {
    position: relative;
}

.macron::before {
    content: "";
    position: absolute;
    top: 7px;
    left: 3px;
    width: 11px;
    height: 3px;
    background: #c03038;
}

/* Toolbars */
.toolbar {
    display: flex;
    height: 47px;
}

.toolbar.lower {
    height: 49px;
}

.group {
    display: flex;
    align-items: center;
    padding: 0 9px 6px 5px;
    background: var(--bar);
    border-right: 1px dotted #f4f4f4;
    border-top-right-radius: 6px;
}

.lower .group {
    padding: 0 10px 2px 4px;
}

.group::before {
    content: "";
    width: 4px;
    height: 33px;
    background: repeating-linear-gradient(#4a9bdc 0 4px, transparent 4px 7px);
}

.group button {
    flex: 44;
}

.group .mid {
    flex: 36;
}

.group .narrow {
    flex: 28;
}

.group svg {
    width: 28px;
    height: 28px;
    overflow: visible;
    filter: drop-shadow(0 0 1px #f4f4f4);
}

.g-file { width: 151px; }
.g-edit { width: 363px; }
.g-view { width: 498px; }
.g-setup { width: 325px; }
.g-info { width: 410px; }
.g-modes { width: 281px; }
.g-shape { width: 454px; }
.g-dim { width: 150px; }
.g-route { width: 368px; }
.g-net { width: 63px; }
.g-text { width: 193px; }

/* Small glyphs */
.grip {
    width: 5px;
    height: 12px;
    background: linear-gradient(#4a9bdc 0 4px, transparent 4px 8px, #4a9bdc 8px);
}

.pin {
    width: 12px;
    height: 14px;
}

.x {
    width: 12px;
    height: 12px;
}

.tri {
    width: 0;
    height: 0;
    border: 5px solid transparent;
}

.tri.up {
    border-top: 0;
    border-bottom-color: #000;
}

.tri.down {
    border-bottom: 0;
    border-top-color: #000;
}

.tri.left {
    border-left: 0;
    border-right-color: #000;
}

.panel-title .tri {
    border-left-width: 4px;
    border-right-width: 4px;
}

.tri.faint {
    border-top-color: #777;
}

/* Panels */
.workspace {
    display: grid;
    grid-template-columns: 289px minmax(0, 1fr) 338px;
    flex: 1;
    min-height: 0;
    padding-top: 2px;
}

.panel-title {
    display: flex;
    align-items: center;
    height: 22px;
    margin-right: 3px;
    padding: 0 2px 4px 3px;
    background: var(--bar);
}

.panel-title h2 {
    flex: 1;
    margin-left: 6px;
    font: 14px/18px var(--ui);
}

.panel-title button {
    width: 18px;
    height: 18px;
}

.panel-title button:nth-of-type(1) {
    margin-right: 6px;
}

.find-panel .panel-title {
    margin: 0 11px 0 2px;
}

.find-body {
    padding: 11px 12px 0 13px;
}

fieldset {
    min-width: 0;
    margin: 0;
    padding: 0 8px;
    border: 2px groove #e0e0e0;
}

legend {
    padding: 0 2px;
}

.all-buttons {
    display: flex;
    gap: 15px;
    margin-top: 5px;
}

.btn {
    height: 23px;
    padding: 0 9px;
}

.btn:disabled {
    color: var(--muted);
    text-shadow: 1px 1px #fff;
}

.filters {
    display: grid;
    grid-template-columns: 118px 1fr;
    grid-auto-rows: 31px;
    margin: 3px 0 0;
    color: var(--muted);
    text-shadow: 1px 1px #fff;
}

.filters label {
    display: flex;
    align-items: center;
    gap: 8px;
    white-space: nowrap;
}

.filters input:disabled, .prompt input:disabled {
    background: var(--face);
}

input[type="checkbox"] {
    appearance: none;
    flex: none;
    width: 17px;
    height: 17px;
    margin: 0;
    background: #fdfdfd;
    border: 2px solid;
    border-color: var(--shade) #e8e8e8 #e8e8e8 var(--shade);
}

input[type="checkbox"]:checked::after {
    content: "";
    display: block;
    width: 5px;
    height: 9px;
    margin: 0 0 0 4px;
    border: solid #000;
    border-width: 0 3px 3px 0;
    transform: rotate(40deg);
}

.by-name {
    display: grid;
    grid-template-columns: 168px 72px;
    gap: 6px 8px;
    margin-top: 10px;
    padding-top: 4px;
    padding-bottom: 10px;
}

.by-name .btn {
    height: 30px;
}

.prompt {
    display: flex;
    align-items: center;
    gap: 11px;
    color: #444;
}

.prompt input {
    flex: 1;
    min-width: 0;
    height: 27px;
    border: 2px solid;
    border-color: var(--shade) #e4e4e4 #e4e4e4 var(--shade);
}

.btn.query {
    height: 31px;
    margin-top: 19px;
}

/* Drop-down with a raised arrow button */
.combo {
    display: block;
    position: relative;
}

.combo select {
    appearance: none;
    display: block;
    width: 100%;
    height: 27px;
    padding: 0 24px 0 3px;
    background: #fdfdfd;
    border: 2px solid;
    border-color: var(--shade) #d8d8d8 #d8d8d8 var(--shade);
    border-radius: 0;
    opacity: 1;
}

.combo::after {
    content: "";
    position: absolute;
    top: 2px;
    right: 1px;
    bottom: 1px;
    width: 23px;
    background: var(--face);
    border: 2px solid;
    border-color: #fff var(--shade) var(--shade) #fff;
    pointer-events: none;
}

.combo::before {
    content: "";
    position: absolute;
    z-index: 1;
    top: calc(50% - 2px);
    right: 7px;
    border: 5px solid transparent;
    border-bottom: 0;
    border-top-color: #000;
    pointer-events: none;
}

.combo.off select {
    background: var(--face);
    color: var(--shade);
}

.combo.off::before {
    border-top-color: #8f8f8f;
}

/* Design canvas and docked windows */
.center {
    display: flex;
    flex-direction: column;
    gap: 9px;
    min-width: 0;
    padding: 0 10px 5px 1px;
}

.design {
    flex: 1;
    min-height: 0;
    background: #000;
    border: solid #777;
    border-width: 2px 0 1px 1px;
}

.design svg {
    display: block;
}

.docks {
    display: flex;
    gap: 9px;
    height: 112px;
}

.dock {
    display: flex;
    border: 1px solid var(--line);
}

.command {
    flex: 1;
    min-width: 0;
}

.dock-title {
    display: flex;
    flex-direction: column;
    align-items: center;
    gap: 7px;
    width: 24px;
    padding: 7px 0 4px;
    background: linear-gradient(90deg, #e3e5e2, #b8bbb7);
}

.dock-title h2 {
    flex: 1;
    margin: -5px 0;
    font: 14px/20px var(--ui);
    writing-mode: vertical-rl;
    transform: rotate(180deg);
}

.dock-title .grip {
    width: 12px;
    height: 5px;
    background: linear-gradient(90deg, #4a9bdc 0 4px, transparent 4px 8px, #4a9bdc 8px);
}

.side-pin {
    margin-top: 3px;
    transform: rotate(-90deg);
}

.log {
    flex: 1;
    margin-bottom: 8px;
    padding: 3px 2px;
    background: #fdfefc;
    border: 1px solid var(--line);
    font: 15px/18px "Liberation Sans", sans-serif;
}

.world {
    width: 254px;
}

.world-view {
    flex: 1;
    margin: 4px 3px;
    background: #000;
}

.world-view svg {
    display: block;
    width: 100%;
    height: 100%;
}

.scrollbar {
    display: flex;
    flex-direction: column;
    width: 24px;
    background: #f8f8f6;
}

.scrollbar button {
    width: 100%;
    height: 23px;
}

.track {
    display: flex;
    flex: 1;
    flex-direction: column;
}

.thumb {
    height: 58%;
}

.scrollbar.low {
    margin-bottom: 8px;
}

.low .track {
    justify-content: flex-end;
}

.low .thumb {
    height: 11px;
}

/* Right side */
.side {
    display: flex;
    flex-direction: column;
    gap: 8px;
    padding-right: 1px;
}

.visibility, .options {
    border-left: 2px solid #a0a0a0;
}

.options {
    flex: 1;
    border-top: 1px solid var(--line);
}

.views {
    display: grid;
    grid-template-columns: 60px 218px;
    align-items: center;
    margin-top: 20px;
}

.layers {
    display: block;
    width: 280px;
    margin-top: 3px;
}

.layers thead, .layers tbody {
    display: block;
}

.layers tr {
    display: grid;
    grid-template-columns: 101px repeat(6, 1fr);
    align-items: center;
    height: 31px;
}

.layers th, .layers td {
    display: flex;
    justify-content: center;
    padding: 0;
    font-weight: 400;
}

.layers th:first-child {
    justify-content: flex-start;
}

.layers .head {
    display: flex;
    gap: 8px;
    text-decoration: underline;
}

.layers .head th:first-child {
    width: 81px;
}

.planes {
    display: flex;
    flex: 1;
    align-items: center;
    justify-content: space-between;
    padding-right: 15px;
}

.layer-list {
    display: flex;
    justify-content: space-between;
    height: 241px;
    margin-top: 5px;
    overflow: hidden;
    border: 2px solid var(--line);
    border-bottom: 0;
}

.layer-list .layers {
    margin-top: 0;
}

.swatch {
    width: 17px;
    height: 18px;
    background: #000;
    border: 1px solid var(--shade);
    box-shadow: inset 0 0 0 2px #a8a8a8;
}

.swatch.red {
    background: #a00000;
}

.swatch.blue {
    background: #0000f0;
}

.swatch.yellow {
    background: #fafa10;
}

.options-body {
    display: grid;
    grid-template-columns: 21px 208px;
    align-items: center;
    gap: 18px 8px;
    padding: 27px 0 0 21px;
}

.options-body p {
    grid-column: 1 / -1;
    margin: 0 0 5px -11px;
}

.subclass select {
    height: 31px;
    padding-left: 28px;
}

.chip {
    position: absolute;
    top: 6px;
    left: 7px;
    width: 16px;
    height: 20px;
    background: #a00000;
    border: 1px solid #000;
}

/* Status bar */
.statusbar {
    display: flex;
    gap: 2px;
    height: 25px;
    padding: 1px 0 2px 1px;
    border-top: 1px solid var(--shade);
}

.cell {
    flex: none;
    border: 1px solid;
    border-color: var(--line) #fff #fff var(--shade);
    border-left-width: 2px;
    line-height: 20px;
    text-align: center;
}

.idle {
    flex: 1;
    text-align: left;
}

.ready {
    width: 73px;
    background: #10fa08;
}

.w-l { width: 184px; }
.w-m { width: 171px; }
.w-s { width: 144px; }
.w-xs { width: 59px; }

.statusbar button {
    width: 23px;
}

.cell.last {
    display: flex;
    justify-content: space-between;
    width: 238px;
    padding: 0 89px 0 34px;
}

.cell b {
    padding: 0 4px;
    background: #10fa08;
    font-weight: 400;
}

/* Taskbar */
.taskbar {
    display: flex;
    align-items: center;
    height: 43px;
    background: #8094ab;
    border-top: 1px solid #b9c6d4;
    color: #f4f8fc;
    font: 17px/24px "Noto Sans", "Noto Sans CJK SC", sans-serif;
}

.start {
    width: 76px;
}

.start svg {
    width: 50px;
    height: 44px;
}

.task {
    justify-content: flex-start;
    gap: 6px;
    width: 224px;
    height: 40px;
    margin-left: 4px;
    padding-left: 12px;
    background: linear-gradient(170deg, #b9c5d2, #8799b0 50%, #8ea2b9);
    border: 1px solid #4d5d70;
    border-radius: 4px;
    box-shadow: inset 0 0 0 1px #b4c2d1;
    text-shadow: 0 0 2px #5a6a7c;
}

.start + .task {
    margin-left: 7px;
}

.task.active {
    background: linear-gradient(170deg, #d5dce2, #aab8c6 50%, #bccad7);
}

.task svg, .quick svg, .tray svg {
    width: 24px;
    height: 24px;
}

.quick {
    width: 64px;
    padding-left: 8px;
}

.tray {
    display: flex;
    align-items: center;
    gap: 10px;
    align-self: stretch;
    margin-left: auto;
}

.tray .spaced {
    margin-left: 34px;
}

.tray time {
    margin: 0 8px 0 14px;
    text-shadow: 0 0 2px #5a6a7c;
}

.show-desktop {
    align-self: stretch;
    width: 18px;
    background: linear-gradient(#5b6d82, #8fa1b5);
    border: 1px solid #465568;
}

/* Channel stamps over the clock area */
.stamps {
    display: flex;
    gap: 5px;
    position: absolute;
    right: 2px;
    bottom: 27px;
}

.stamps span {
    width: 44px;
    height: 44px;
    background: #dc1010;
    border: 1px solid #dc1010;
    border-radius: 4px;
    box-shadow: inset 0 0 0 1px #fbb, 0 0 0 1px #fff;
    color: #fff;
    font: italic 900 36px/40px "Noto Sans CJK SC", sans-serif;
    text-align: center;
}

.stamps .small {
    font: 400 16px/21px "Noto Sans CJK SC", sans-serif;
}
```
